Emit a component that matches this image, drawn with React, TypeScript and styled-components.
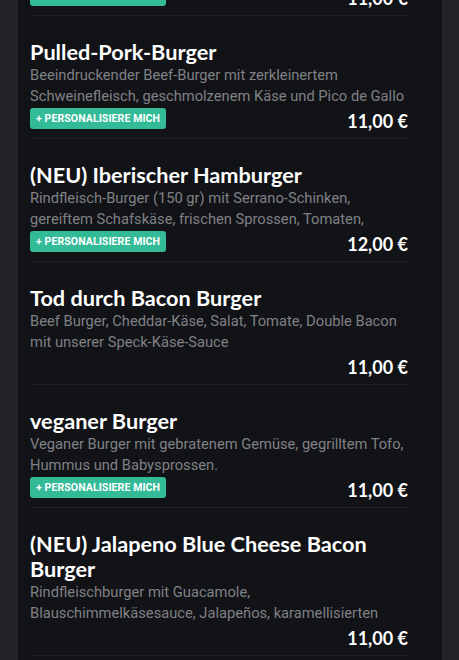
import React from "react";
import styled, { createGlobalStyle } from "styled-components";

const Global = createGlobalStyle`
  html, body { margin: 0; padding: 0; background: #222428; }
  body { font-family: Roboto, "Noto Sans", sans-serif; overflow: hidden; }
`;

const Page = styled.div`
  height: 660px;
  overflow: hidden;
  padding: 0 17px 0 18px;
  background: #222428;
`;

const Panel = styled.div`
  height: 100%;
  background: #111317;
  padding: 0 34px 0 12px;
  overflow: hidden;
`;

const List = styled.div`
  display: flex;
  flex-direction: column;
  margin-top: -107px;
`;

const Item = styled.div`
  display: flex;
  flex-direction: column;
  padding: 24px 0 8px;
  border-bottom: 1px solid #1d1f24;
`;

const Title = styled.h3`
  margin: 0;
  font-family: Lato, "Noto Sans", sans-serif;
  font-weight: 700;
  font-size: 21.7px;
  line-height: 25px;
  color: #ffffff;
`;

const Desc = styled.p`
  margin: 0;
  font-family: Roboto, sans-serif;
  font-size: 14.7px;
  line-height: 21px;
  color: #808185;
  height: 42px;
  overflow: hidden;
`;

const Footer = styled.div`
  display: flex;
  justify-content: space-between;
  align-items: flex-end;
  height: 23px;
`;

const PersonalizeButton = styled.button`
  border: none;
  background: #33bb97;
  color: #ffffff;
  border-radius: 3px;
  height: 21px;
  padding: 0 6px;
  margin-top: 1px;
  font-family: Roboto, sans-serif;
  font-weight: 700;
  font-size: 10.5px;
  letter-spacing: 0.1px;
  text-transform: uppercase;
  align-self: flex-start;
  cursor: pointer;
`;

const Price = styled.span`
  margin-left: auto;
  font-family: Lato, "Noto Sans", sans-serif;
  font-weight: 700;
  font-size: 18px;
  line-height: 18px;
  color: #ffffff;
`;

type Dish = { title: string; desc: string; price: string; custom: boolean };

const dishes: Dish[] = [
  {
    title: "Klassischer Burger",
    desc: "Rindfleisch-Burger mit Cheddar-Käse, Salat, Tomate, Gurken, roten Zwiebeln und Hausgemachter Sauce",
    price: "11,00 €",
    custom: true,
  },
  {
    title: "Pulled-Pork-Burger",
    desc: "Beeindruckender Beef-Burger mit zerkleinertem Schweinefleisch, geschmolzenem Käse und Pico de Gallo",
    price: "11,00 €",
    custom: true,
  },
  {
    title: "(NEU) Iberischer Hamburger",
    desc: "Rindfleisch-Burger (150 gr) mit Serrano-Schinken, gereiftem Schafskäse, frischen Sprossen, Tomaten, Zwiebeln und Alioli",
    price: "12,00 €",
    custom: true,
  },
  {
    title: "Tod durch Bacon Burger",
    desc: "Beef Burger, Cheddar-Käse, Salat, Tomate, Double Bacon mit unserer Speck-Käse-Sauce",
    price: "11,00 €",
    custom: false,
  },
  {
    title: "veganer Burger",
    desc: "Veganer Burger mit gebratenem Gemüse, gegrilltem Tofo, Hummus und Babysprossen.",
    price: "11,00 €",
    custom: true,
  },
  {
    title: "(NEU) Jalapeno Blue Cheese Bacon Burger",
    desc: "Rindfleischburger mit Guacamole, Blauschimmelkäsesauce, Jalapeños, karamellisierten Zwiebeln und Bacon",
    price: "11,00 €",
    custom: false,
  },
];

export default function App() {
  return (
    <>
      <Global />
      <Page>
        <Panel>
          <List>
            {dishes.map((d) => (
              <Item key={d.title}>
                <Title>{d.title}</Title>
                <Desc>{d.desc}</Desc>
                <Footer>
                  {d.custom && <PersonalizeButton>+ Personalisiere mich</PersonalizeButton>}
                  <Price>{d.price}</Price>
                </Footer>
              </Item>
            ))}
          </List>
        </Panel>
      </Page>
    </>
  );
}
